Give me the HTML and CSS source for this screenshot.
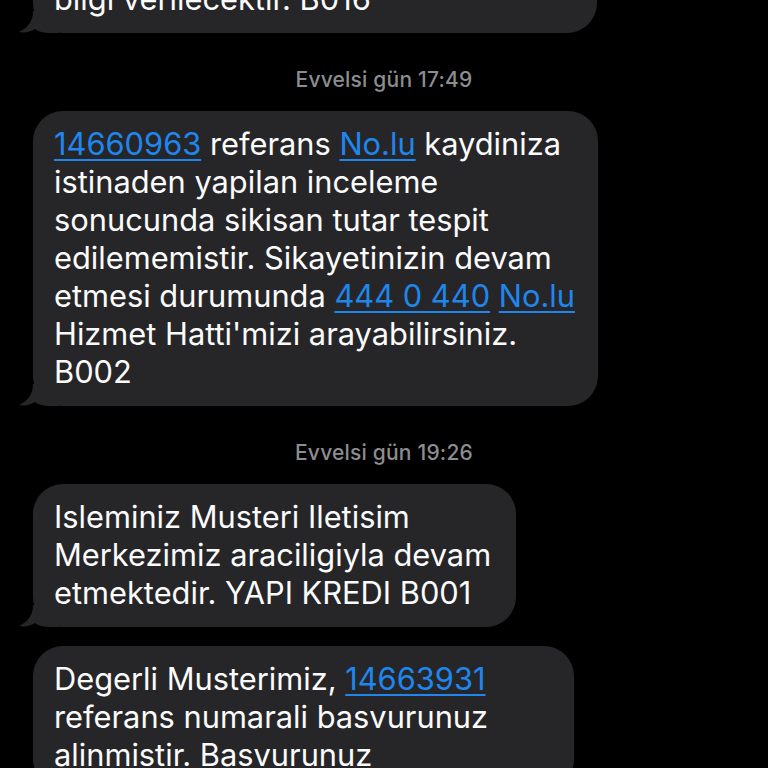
FILE: index.html
```html
<!DOCTYPE html>
<html lang="tr">
<head>
<meta charset="utf-8">
<title>Mesajlar</title>
<link rel="stylesheet" href="styles.css">
</head>
<body>
<main class="thread">
  <div class="bubble bubble-first w-564">
    <svg class="tail" viewBox="0 0 40 22" width="40" height="22"><path d="M14 0 C14 10 9 17 0 21 C6 22 11 21 16 18 C20 21 25 22 32 22 H40 V0 Z"/></svg>
    <p class="msg">bilgi verilecektir. B016</p>
  </div>

  <div class="stamp">Evvelsi gün 17:49</div>

  <div class="bubble w-565">
    <svg class="tail" viewBox="0 0 40 22" width="40" height="22"><path d="M14 0 C14 10 9 17 0 21 C6 22 11 21 16 18 C20 21 25 22 32 22 H40 V0 Z"/></svg>
    <p class="msg"><a class="link">14660963</a> referans <a class="link">No.lu</a> kaydiniza<br>istinaden yapilan inceleme<br>sonucunda sikisan tutar tespit<br>edilememistir. Sikayetinizin devam<br>etmesi durumunda <a class="link">444 0 440</a> <a class="link">No.lu</a><br>Hizmet Hatti'mizi arayabilirsiniz.<br>B002</p>
  </div>

  <div class="stamp">Evvelsi gün 19:26</div>

  <div class="bubble w-483">
    <svg class="tail" viewBox="0 0 40 22" width="40" height="22"><path d="M14 0 C14 10 9 17 0 21 C6 22 11 21 16 18 C20 21 25 22 32 22 H40 V0 Z"/></svg>
    <p class="msg">Isleminiz Musteri Iletisim<br>Merkezimiz araciligiyla devam<br>etmektedir. YAPI KREDI B001</p>
  </div>

  <div class="bubble bubble-next w-541">
    <p class="msg">Degerli Musterimiz, <a class="link">14663931</a><br>referans numarali basvurunuz<br>alinmistir. Basvurunuz</p>
  </div>
</main>
</body>
</html>
```

FILE: styles.css
```css
html, body {
  margin: 0;
  padding: 0;
  background: #000;
}

body {
  width: 768px;
  height: 768px;
  overflow: hidden;
  font-family: "Inter", "Roboto", "Liberation Sans", sans-serif;
}

.thread {
  display: flex;
  flex-direction: column;
  align-items: flex-start;
}

.bubble {
  position: relative;
  box-sizing: border-box;
  margin-left: 33px;
  background: #262628;
  border-radius: 30px;
  padding: 14px 20px 15px 21px;
}

.bubble-first {
  margin-top: -34px;
}

.bubble-next {
  margin-top: 19px;
}

.w-564 { width: 564px; }
.w-565 { width: 565px; }
.w-483 { width: 483px; }
.w-541 { width: 541px; }

.msg {
  position: relative;
  margin: 0;
  color: #fbfbfb;
  font-size: 30.8px;
  line-height: 38px;
  white-space: nowrap;
  letter-spacing: 0;
}

.link {
  color: #1f86ee;
  text-decoration: underline;
  text-decoration-thickness: 2px;
  text-underline-offset: 4px;
}

.tail {
  position: absolute;
  left: -14px;
  bottom: 0;
  fill: #262628;
}

.stamp {
  align-self: center;
  margin: 35px 0 19px;
  color: #8c8c91;
  font-size: 21px;
  line-height: 24px;
  font-weight: 500;
  letter-spacing: 0.2px;
}
```
